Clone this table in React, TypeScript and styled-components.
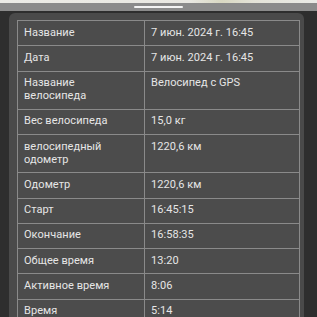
import React from "react";
import styled, { createGlobalStyle } from "styled-components";

const Global = createGlobalStyle`
  html, body { margin: 0; padding: 0; background: #2d2d2d; overflow: hidden; }
  body { font-family: Roboto, Inter, "Liberation Sans", sans-serif; -webkit-font-smoothing: antialiased; }
  #root { width: 317px; height: 317px; overflow: hidden; }
`;

const Screen = styled.div`
  width: 317px;
  height: 317px;
  display: flex;
  flex-direction: column;
  background: #2d2d2d;
  overflow: hidden;
`;

const MapStrip = styled.div`
  flex: none;
  height: 3px;
  background: linear-gradient(90deg, #ecebe6 0%, #e9e8e2 60%, #d9d8c2 70%, #e4e3d8 80%, #eaeae6 100%);
`;

const Grabber = styled.div`
  flex: none;
  height: 8px;
  background: #8b8b8b;
  display: flex;
  align-items: center;
  justify-content: center;
  &::after {
    content: "";
    display: block;
    width: 49px;
    height: 2px;
    border-radius: 1px;
    background: #f4f4f4;
    margin-left: -1px;
  }
`;

const Body = styled.div`
  flex: 1;
  min-height: 0;
  display: flex;
  padding: 2px 13px 0 9px;
  background: #2e2e2e;
  overflow: hidden;
`;

const Panel = styled.div`
  flex: 1;
  min-height: 0;
  background: #4a4a4a;
  border-radius: 6px 6px 0 0;
  padding: 7px 4px 0 8px;
  overflow: hidden;
`;

const Table = styled.table`
  width: 100%;
  border-collapse: collapse;
  table-layout: fixed;
  font-size: 11px;
  line-height: 12.9px;
  color: #e6e6e6;
  background: #4c4c4c;
`;

const Cell = styled.td<{ $wide?: boolean }>`
  border: 1px solid #8a8a8a;
  padding: 5.7px 6px;
  vertical-align: top;
  white-space: pre-line;
  width: ${(p) => (p.$wide ? "auto" : "114px")};
  letter-spacing: 0.05px;
`;

const rows: [string, string][] = [
  ["Название", "7 июн. 2024 г. 16:45"],
  ["Дата", "7 июн. 2024 г. 16:45"],
  ["Название\nвелосипеда", "Велосипед с GPS"],
  ["Вес велосипеда", "15,0 кг"],
  ["велосипедный\nодометр", "1220,6 км"],
  ["Одометр", "1220,6 км"],
  ["Старт", "16:45:15"],
  ["Окончание", "16:58:35"],
  ["Общее время", "13:20"],
  ["Активное время", "8:06"],
  ["Время", "5:14"],
];

export default function App() {
  return (
    <>
      <Global />
      <Screen>
        <MapStrip />
        <Grabber />
        <Body>
          <Panel>
            <Table>
              <tbody>
                {rows.map(([k, v]) => (
                  <tr key={k}>
                    <Cell>{k}</Cell>
                    <Cell $wide>{v}</Cell>
                  </tr>
                ))}
              </tbody>
            </Table>
          </Panel>
        </Body>
      </Screen>
    </>
  );
}
